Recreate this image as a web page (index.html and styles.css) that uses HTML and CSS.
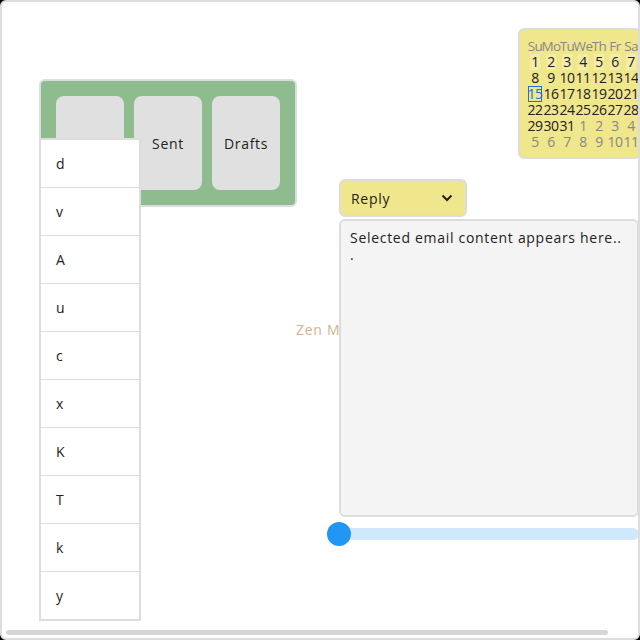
FILE: index.html
```html
<!DOCTYPE html>
<html>
<head>
<meta charset="utf-8">
<link rel="stylesheet" href="styles.css">
</head>
<body>
<div class="app">
  <h1 class="title">Zen Mail</h1>

  <nav class="folders">
    <button class="folder">Inbox</button>
    <button class="folder">Sent</button>
    <button class="folder">Drafts</button>
  </nav>

  <ul class="list">
    <li>d</li><li>v</li><li>A</li><li>u</li><li>c</li>
    <li>x</li><li>K</li><li>T</li><li>k</li><li>y</li>
  </ul>

  <div class="calendar">
    <span class="hd">Su</span><span class="hd">Mo</span><span class="hd">Tu</span><span class="hd">We</span><span class="hd">Th</span><span class="hd">Fr</span><span class="hd">Sa</span>
    <span class="d w1"><i>1</i></span><span class="d w1"><i>2</i></span><span class="d w1"><i>3</i></span><span class="d w1"><i>4</i></span><span class="d w1"><i>5</i></span><span class="d w1"><i>6</i></span><span class="d w1"><i>7</i></span>
    <span class="d">8</span><span class="d">9</span><span class="d">10</span><span class="d">11</span><span class="d">12</span><span class="d">13</span><span class="d">14</span>
    <span class="d sel"><i>15</i></span><span class="d">16</span><span class="d">17</span><span class="d">18</span><span class="d">19</span><span class="d">20</span><span class="d">21</span>
    <span class="d">22</span><span class="d">23</span><span class="d">24</span><span class="d">25</span><span class="d">26</span><span class="d">27</span><span class="d">28</span>
    <span class="d">29</span><span class="d">30</span><span class="d">31</span><span class="d o">1</span><span class="d o">2</span><span class="d o">3</span><span class="d o">4</span>
    <span class="d o">5</span><span class="d o">6</span><span class="d o">7</span><span class="d o">8</span><span class="d o">9</span><span class="d o">10</span><span class="d o">11</span>
  </div>

  <div class="reader">
    <div class="select">
      <span>Reply</span>
      <svg width="12" height="8" viewBox="0 0 12 8"><path d="M1.5 1.5 L6 6 L10.5 1.5" fill="none" stroke="#222" stroke-width="2"/></svg>
    </div>
    <div class="content">Selected email content appears here...</div>
    <div class="slider"><div class="thumb"></div></div>
  </div>

  <div class="hscroll"></div>
</div>
</body>
</html>
```

FILE: styles.css
```css
html { background: #000; margin: 0; padding: 0; }
body {
  margin: 0;
  width: 640px;
  height: 640px;
  overflow: hidden;
  font-family: "Open Sans", "DejaVu Sans", sans-serif;
  letter-spacing: 0.7px;
  color: #222;
}
.app {
  position: relative;
  box-sizing: border-box;
  width: 640px;
  height: 640px;
  background: #fff;
  border: 2px solid #ddd;
  border-radius: 6px;
  overflow: hidden;
}
.title {
  position: absolute;
  left: 294px;
  top: 319px;
  margin: 0;
  font-size: 14px;
  font-weight: 400;
  color: #d2b48c;
  line-height: 18px;
}
.folders {
  position: absolute;
  left: 37px;
  top: 77px;
  width: 258px;
  height: 128px;
  box-sizing: border-box;
  background: #8fbc8f;
  border: 2px solid #ddd;
  border-radius: 6px;
  padding: 15px;
  display: flex;
  gap: 10px;
}
.folder {
  width: 68px;
  height: 94px;
  border: none;
  border-radius: 8px;
  background: #e0e0e0;
  font: inherit;
  letter-spacing: 0.7px;
  font-size: 14px;
  color: #222;
  padding: 0;
}
.list {
  position: absolute;
  left: 37px;
  top: 136px;
  width: 102px;
  margin: 0;
  padding: 0;
  list-style: none;
  box-sizing: border-box;
  background: #fff;
  border: 2px solid #ddd;
}
.list li {
  height: 47px;
  line-height: 47px;
  padding-left: 15px;
  font-size: 14px;
  border-bottom: 1px solid #ddd;
}
.list li:last-child { border-bottom: none; }
.calendar {
  position: absolute;
  left: 516px;
  top: 26px;
  box-sizing: border-box;
  height: 131px;
  background: #f0e68c;
  border: 2px solid #ddd;
  border-radius: 6px;
  padding: 8px 0 6px 7px;
  display: grid;
  grid-template-columns: repeat(7, 16px);
  grid-auto-rows: 16px;
  justify-items: center;
  align-items: center;
  font-size: 14px;
  line-height: 16px;
  letter-spacing: -0.6px;
  white-space: nowrap;
}
.calendar span { display: flex; justify-content: center; width: 16px; }
.calendar i { font-style: normal; }
.hd { color: #888; font-size: 13.5px; }
.d { color: #222; }
.w1 i { background: rgba(255,255,255,0.25); padding: 0 1px; }
.sel i { color: #1e6fd9; outline: 1px solid #1e6fd9; outline-offset: -1px; }
.o { color: #888; }
.reader {
  position: absolute;
  left: 337px;
  top: 177px;
  width: 300px;
  display: flex;
  flex-direction: column;
}
.select {
  box-sizing: border-box;
  width: 128px;
  height: 38px;
  background: #f0e68c;
  border: 2px solid #ddd;
  border-radius: 6px;
  display: flex;
  align-items: center;
  justify-content: space-between;
  padding: 0 12px 0 10px;
  font-size: 14px;
}
.content {
  box-sizing: border-box;
  margin-top: 2px;
  width: 300px;
  height: 298px;
  background: #f4f4f4;
  border: 2px solid #ddd;
  border-radius: 6px;
  padding: 8px 12px 8px 9px;
  font-size: 14px;
  line-height: 17px;
  line-break: anywhere;
}
.slider {
  position: relative;
  margin-top: 11px;
  width: 300px;
  height: 12px;
  border-radius: 6px;
  background: #d0e8fb;
}
.thumb {
  position: absolute;
  left: -12px;
  top: -6px;
  width: 24px;
  height: 24px;
  border-radius: 50%;
  background: #2196f3;
}
.hscroll {
  position: absolute;
  left: 4px;
  top: 628px;
  width: 602px;
  height: 5px;
  border-radius: 3px;
  background: #d6d6d6;
}
```
